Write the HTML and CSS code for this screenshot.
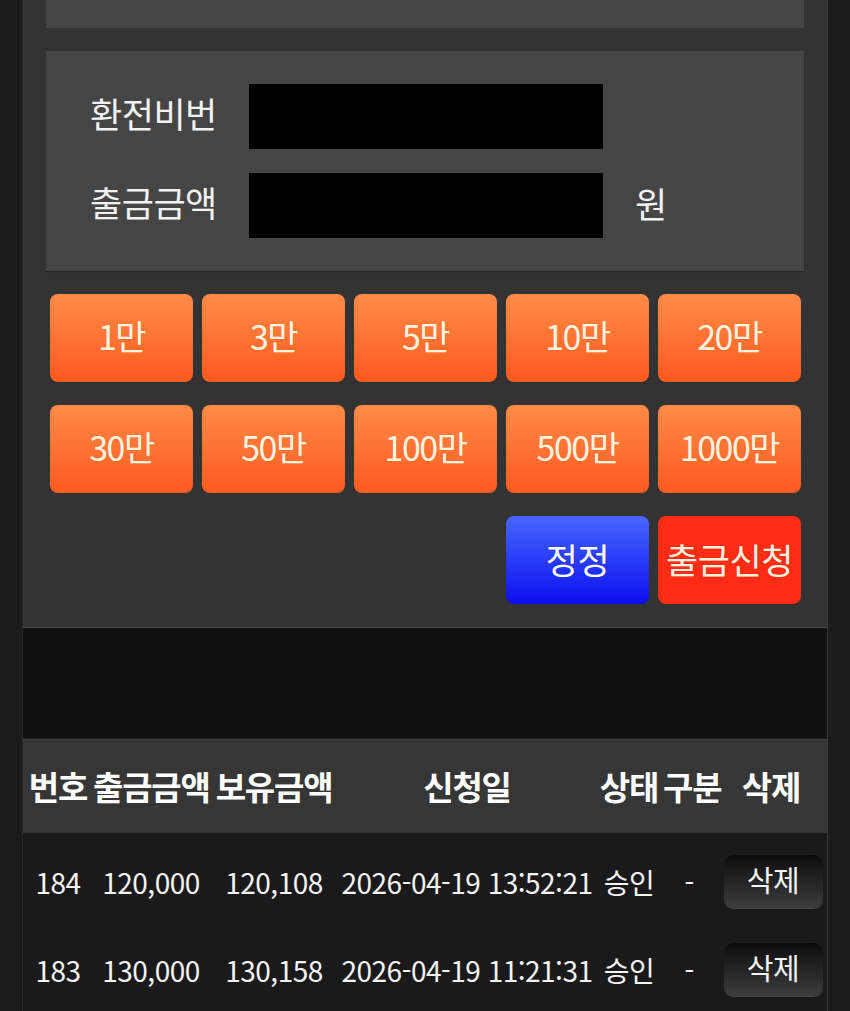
FILE: index.html
```html
<!DOCTYPE html>
<html lang="ko">
<head>
<meta charset="utf-8">
<title>출금신청</title>
<link rel="stylesheet" href="styles.css">
</head>
<body>
<div class="wrap">
  <section class="panel">
    <div class="box box-top"></div>
    <div class="box form-box">
      <div class="form-row">
        <label class="form-label">환전비번</label>
        <div class="form-input"></div>
      </div>
      <div class="form-row">
        <label class="form-label">출금금액</label>
        <div class="form-input"></div>
        <span class="unit">원</span>
      </div>
    </div>
    <div class="btn-grid">
      <button class="btn btn-amt">1만</button>
      <button class="btn btn-amt">3만</button>
      <button class="btn btn-amt">5만</button>
      <button class="btn btn-amt">10만</button>
      <button class="btn btn-amt">20만</button>
      <button class="btn btn-amt">30만</button>
      <button class="btn btn-amt">50만</button>
      <button class="btn btn-amt">100만</button>
      <button class="btn btn-amt">500만</button>
      <button class="btn btn-amt">1000만</button>
      <button class="btn btn-reset">정정</button>
      <button class="btn btn-submit">출금신청</button>
    </div>
  </section>
  <div class="spacer"></div>
  <table class="history">
    <colgroup>
      <col class="c1"><col class="c2"><col class="c3"><col class="c4"><col class="c5"><col class="c6"><col class="c7">
    </colgroup>
    <thead>
      <tr>
        <th>번호</th><th>출금금액</th><th>보유금액</th><th>신청일</th><th>상태</th><th>구분</th><th>삭제</th>
      </tr>
    </thead>
    <tbody>
      <tr class="first">
        <td>184</td><td>120,000</td><td>120,108</td><td>2026-04-19 13:52:21</td><td>승인</td><td>-</td><td><button class="del">삭제</button></td>
      </tr>
      <tr>
        <td>183</td><td>130,000</td><td>130,158</td><td>2026-04-19 11:21:31</td><td>승인</td><td>-</td><td><button class="del">삭제</button></td>
      </tr>
    </tbody>
  </table>
</div>
</body>
</html>
```

FILE: styles.css
```css
* { box-sizing: border-box; }
html, body {
  margin: 0;
  padding: 0;
  background: #1b1b1b;
  height: 1011px;
  overflow: hidden;
}
body {
  font-family: "Noto Sans CJK KR", "Noto Sans", sans-serif;
  color: #ffffff;
}
.wrap {
  margin: 0 22px;
  border-left: 1px solid #2a2a2a;
  border-right: 1px solid #3a3a3a;
  background: #1b1a1b;
}
.panel {
  background: #333333;
  padding: 0 23px 23px;
  border-bottom: 1px solid #4a4a4a;
}
.box {
  background: #454545;
}
.box-top {
  height: 28px;
  margin-bottom: 23px;
}
.form-box {
  padding: 33px 44px;
  display: flex;
  flex-direction: column;
  gap: 24px;
  box-shadow: 0 1px 1px rgba(0,0,0,0.25);
}
.form-row {
  display: flex;
  align-items: center;
  height: 65px;
}
.form-label {
  width: 159px;
  font-size: 35px;
  line-height: 1;
  color: #f2f2f2;
  padding-bottom: 8px;
  letter-spacing: -0.5px;
}
.form-input {
  width: 354px;
  height: 65px;
  background: #000;
}
.unit {
  margin-left: 32px;
  font-size: 35px;
  line-height: 1;
  padding-bottom: 6px;
  color: #f2f2f2;
}
.btn-grid {
  margin-top: 23px;
  padding: 0 4px;
  display: grid;
  grid-template-columns: repeat(5, 143px);
  grid-auto-rows: 88px;
  column-gap: 9px;
  row-gap: 23px;
}
.btn {
  border: none;
  border-radius: 8px;
  font-family: inherit;
  font-size: 34px;
  color: #fff3e0;
  padding: 0 0 4px;
  line-height: 1;
  letter-spacing: -1.5px;
}
.btn-amt {
  background: linear-gradient(#ff8b47, #ff5a1e);
}
.btn-reset {
  grid-column: 4;
  background: linear-gradient(#4866ff, #0a10ee);
  color: #ffffff;
  font-size: 35px;
  letter-spacing: -0.5px;
}
.btn-submit {
  grid-column: 5;
  background: #fd2c14;
  font-size: 35px;
  letter-spacing: -0.5px;
}
.spacer {
  height: 111px;
  background: #101010;
  border-bottom: 1px solid #222;
}
.history {
  width: 100%;
  border-collapse: collapse;
  table-layout: fixed;
}
.c1 { width: 70px; }
.c2 { width: 116px; }
.c3 { width: 130px; }
.c4 { width: 256px; }
.c5 { width: 68px; }
.c6 { width: 52px; }
.c7 { width: auto; }
.history th {
  background: #363636;
  border-top: 1px solid #3e3e3e;
  height: 93px;
  font-size: 33px;
  font-weight: 700;
  white-space: nowrap;
  padding: 0;
  text-align: center;
  letter-spacing: -1.2px;
}
.history td {
  height: 88px;
  font-size: 28px;
  line-height: 1;
  text-align: center;
  padding: 0;
  white-space: nowrap;
  color: #f4f4f4;
  letter-spacing: -0.5px;
}
.history tr.first td {
  height: 93px;
  padding-top: 5px;
}
.del {
  width: 99px;
  height: 53px;
  border: none;
  border-radius: 9px;
  background: linear-gradient(#0d0d0d, #3c3c3c);
  box-shadow: 0 1px 0 #444;
  color: #f4f4f4;
  font-family: inherit;
  font-size: 29px;
  line-height: 1;
  padding: 0 0 4px;
  margin-left: 4px;
  letter-spacing: -0.5px;
}
```
